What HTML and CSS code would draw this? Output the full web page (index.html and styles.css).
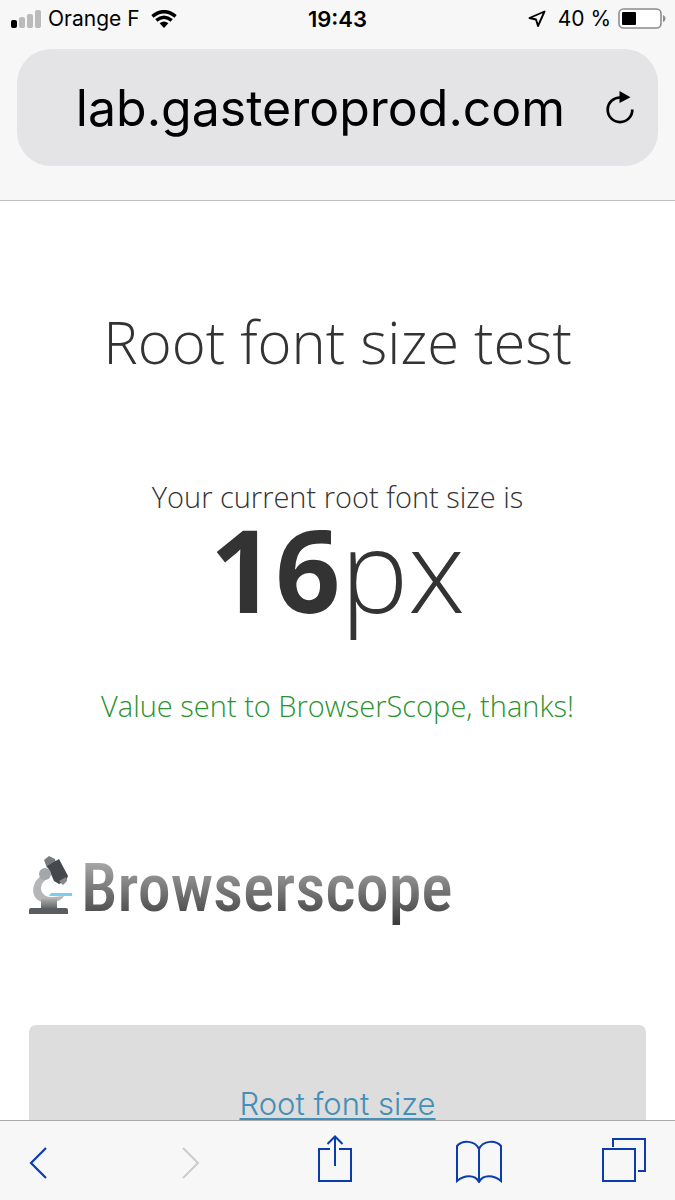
FILE: index.html
```html
<!DOCTYPE html>
<html lang="en">
<head>
<meta charset="utf-8">
<meta name="viewport" content="width=device-width, initial-scale=1">
<title>Root font size test</title>
<link rel="stylesheet" href="styles.css">
</head>
<body>
<div class="browser">
  <header class="chrome">
    <div class="status">
      <div class="status-left">
        <svg width="30" height="18" viewBox="0 0 30 18" aria-hidden="true"><rect x="0" y="10" width="6" height="8" rx="2"/><g fill="#bbb"><rect x="8" y="7" width="6" height="11" rx="2"/><rect x="16" y="4" width="6" height="14" rx="2"/><rect x="24" y="0" width="6" height="18" rx="2"/></g></svg>
        <span class="carrier">Orange F</span>
        <svg class="wifi" width="26" height="18" viewBox="0 0 26 18" aria-hidden="true"><g fill="none" stroke="#000" stroke-width="3.4"><path d="M1.4 6.3Q13-3 24.6 6.3"/><path d="M5.3 10.4q7.7-6.3 15.4 0"/></g><path d="M8.600 13.300q4.400-3.700 8.800 0L13 18z"/></svg>
      </div>
      <time class="clock">19:43</time>
      <div class="status-right">
        <svg width="18" height="18" viewBox="0 0 18 18" fill="none" stroke="#000" stroke-width="1.9" stroke-linejoin="round" aria-hidden="true"><path d="M16.500 1.500 1.500 8 8 9.500 10 16z"/></svg>
        <span class="charge">40 %</span>
        <svg width="48" height="21" viewBox="0 0 48 21" aria-hidden="true"><rect x="1" y="1" width="42" height="19" rx="4.500" fill="#fff" stroke="#8c8c8c" stroke-width="1.600"/><rect x="4" y="4" width="14" height="13" rx="1"/><path d="M45 7q2.500 1 2.500 3.500T45 14z" fill="#8c8c8c"/></svg>
      </div>
    </div>
    <form class="address">
      <input class="url" type="text" aria-label="Address" value="lab.gasteroprod.com">
      <button class="reload" type="button" aria-label="Reload">
        <svg width="30" height="34" viewBox="0 0 30 34" aria-hidden="true"><path d="M15.500 6.500A12.300 12.300 0 1 0 27.300 18.500" fill="none" stroke="#000" stroke-width="2.700"/><path d="M14.500 0 25.500 6.300 14.500 12z"/></svg>
      </button>
    </form>
  </header>
  <main class="page">
    <h1 class="title">Root font size test</h1>
    <p class="lead">Your current root font size is</p>
    <p class="size"><strong>16</strong>px</p>
    <p class="sent">Value sent to BrowserScope, thanks!</p>
    <div class="brand">
      <svg class="scope" width="44" height="60" viewBox="0 0 44 60" aria-hidden="true">
        <defs><linearGradient id="base" x2="0" y2="1"><stop stop-color="#aaa"/><stop offset="1" stop-color="#55585b"/></linearGradient></defs>
        <path d="M12 20C1 28 2 43 13 46H25Q32 45 35 40L24 41C11 42 8 29 18 23z" fill="#b4b6b7"/>
        <path d="M12 43h16v11H12z" fill="url(#base)"/>
        <path d="M0 54q0-2 2-2h35q2 0 2 2v4H0z" fill="#5b5e61"/>
        <path d="M22 37h21v3H20z" fill="#78cdf0"/>
        <path d="m15 4 5-4 6 3 1 4-9 5z" fill="#777b7d"/>
        <path d="m18 10 12-7 9 17-2 5-7 3-5-3-3-7z" fill="#45494d"/>
        <path d="m30 25 7-4 1 4-4 4z" fill="#858789"/>
        <circle cx="16" cy="18" r="6" fill="#a3a7a9"/>
      </svg>
      <span class="brand-name">Browserscope</span>
    </div>
    <div class="results"><a class="result-link" href="#root-font-size">Root font size</a></div>
  </main>
  <nav class="toolbar" aria-label="Browser">
    <button class="back" type="button" aria-label="Back"><svg width="20" height="48" viewBox="0 0 20 48"><path d="M17 13 2 28l15 15" stroke-width="2.200"/></svg></button>
    <button type="button" aria-label="Forward" disabled><svg width="20" height="48" viewBox="0 0 20 48"><path d="m3 13 15 15L3 43" stroke-width="2"/></svg></button>
    <button type="button" aria-label="Share"><svg width="36" height="48" viewBox="0 0 36 48"><path d="M13 14H2v32h32V14H22M18 31V2M10.500 9 18 1.500 25.500 9"/></svg></button>
    <button type="button" aria-label="Bookmarks"><svg width="46" height="48" viewBox="0 0 46 48"><path d="M23 47V14C19 5 6 5 1 11v35c7-6 18-7 22 1 4-8 15-7 22-1V11C40 5 27 5 23 14"/></svg></button>
    <button type="button" aria-label="Tabs"><svg width="46" height="48" viewBox="0 0 46 48"><path d="M2 14h32v32H2zM12 12V4h32v32h-7"/></svg></button>
  </nav>
</div>
</body>
</html>
```
FILE: styles.css
```css
* { box-sizing: border-box; }
body { margin: 0; background: #fff; color: #333; font-family: "Open Sans", sans-serif; }
svg { display: block; flex: none; }
button { padding: 0; border: 0; background: none; color: inherit; }
.browser { display: flex; flex-direction: column; height: 100vh; overflow: hidden; }
.chrome { flex: none; padding: 0 17px 34px; background: #f7f7f7; border-bottom: 1px solid #c0c0c2; color: #000; font-family: Inter, "Liberation Sans", sans-serif; }
.status { display: grid; grid-template-columns: 1fr auto 1fr; align-items: center; height: 37px; margin: 0 -6px 12px; font-size: 21px; line-height: 28px; }
.status-left, .status-right { display: flex; align-items: center; gap: 7px; }
.wifi { margin-left: 4px; }
.status-right { justify-content: flex-end; margin-right: -2px; }
.clock { font-size: 22px; font-weight: 600; }
.charge { margin-left: 5px; }
.address { display: flex; align-items: center; height: 117px; padding: 0 23px 0 19px; border-radius: 34px; background: #e4e4e7; }
.url { flex: 1; min-width: 0; padding: 0; border: 0; background: none; color: #000; font: 50px Inter, "Liberation Sans", sans-serif; text-align: center; outline: 0; }
.page { flex: 1; min-height: 0; overflow: hidden; padding: 101px 29px 0; text-align: center; font-weight: 300; }
.title { margin: 0; font-size: 58px; line-height: 80px; font-weight: 300; }
.lead { margin: 95px 0 0; font-size: 29px; line-height: 40px; }
.size { margin: 0; font-size: 114px; line-height: 104px; }
.size strong { font-weight: 700; }
.sent { margin: 65px 0 0; font-size: 29px; line-height: 40px; color: #2a932f; }
.brand { display: flex; align-items: center; gap: 8px; height: 80px; margin: 123px 0 96px; }
.scope { margin-bottom: 7px; }
.brand-name { font: 500 66px/80px "Roboto Condensed", "Liberation Sans Narrow", "Open Sans Condensed", sans-serif; color: transparent; background: linear-gradient(#aaa 15%, #555 75%, #333); background-clip: text; }
.results { height: 240px; padding-top: 58px; border-radius: 7px; background: #ddd; font: 300 31px/42px Inter, sans-serif; }
.result-link { color: #438fb8; text-decoration-thickness: 2px; text-underline-offset: 3px; }
.toolbar { display: flex; justify-content: space-between; flex: none; height: 80px; padding: 14px 28px 0 10px; border-top: 1px solid #aaa; background: #f7f7f7; color: #0b3cae; }
.toolbar button { display: flex; justify-content: center; align-self: flex-start; width: 46px; }
.toolbar .back { width: 58px; }
.toolbar button:disabled { color: #ccc; }
.toolbar svg { fill: none; stroke: currentColor; stroke-width: 2; }
```
